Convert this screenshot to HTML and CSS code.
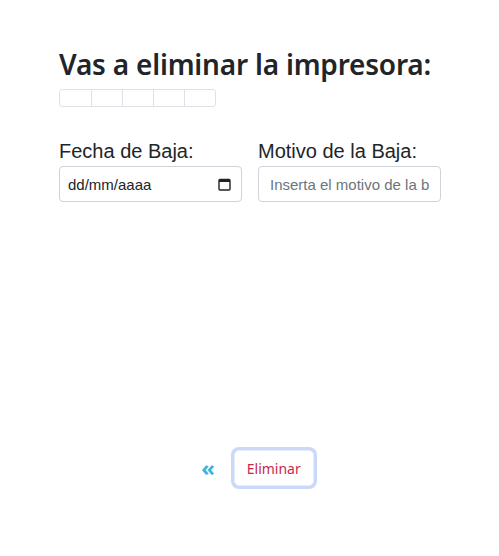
FILE: index.html
```html
<!DOCTYPE html>
<html lang="es">
<head>
<meta charset="utf-8">
<link rel="stylesheet" href="styles.css">
</head>
<body>
<main class="page">
  <h1 class="title">Vas a eliminar la impresora:</h1>
  <table class="info">
    <tr><td></td><td></td><td></td><td></td><td></td></tr>
  </table>
  <div class="fields">
    <div class="field">
      <label class="label">Fecha de Baja:</label>
      <div class="input date"><span>dd/mm/aaaa</span>
        <svg width="13" height="13" viewBox="0 0 13 13"><rect x="1" y="1.5" width="11" height="10.5" rx="1" fill="none" stroke="#222" stroke-width="1.4"/><rect x="1" y="1.5" width="11" height="2.5" fill="#222"/></svg>
      </div>
    </div>
    <div class="field">
      <label class="label">Motivo de la Baja:</label>
      <div class="input text"><span class="ph">Inserta el motivo de la b</span></div>
    </div>
  </div>
  <div class="actions">
    <span class="back">«</span>
    <button class="btn">Eliminar</button>
  </div>
</main>
</body>
</html>
```
FILE: styles.css
```css
* { box-sizing: border-box; }
body { margin: 0; background: #fff; font-family: "Noto Sans", sans-serif; color: #212529; }
.page { padding: 44px 0 8px 59px; width: 499px; }
.title { margin: 0; font-size: 28px; font-weight: 600; line-height: 40px; letter-spacing: -0.2px; }
.info { border-collapse: separate; border-spacing: 0; margin-top: 5px; border: 1px solid #dee2e6; border-radius: 3px; }
.info td { width: 31px; height: 16px; border-left: 1px solid #dee2e6; padding: 0; }
.info td:first-child { border-left: none; }
.fields { display: flex; gap: 16px; margin-top: 32px; }
.field { display: flex; flex-direction: column; width: 183px; }
.label { font-family: "Liberation Sans", Arial, sans-serif; font-size: 20px; line-height: 24px; color: #212529; margin-bottom: 3px; }
.input { height: 36px; border: 1px solid #ced4da; border-radius: 4px; display: flex; align-items: center; padding: 0 10px 0 11px; font-family: "Liberation Sans", Arial, sans-serif; font-size: 15px; color: #212529; overflow: hidden; white-space: nowrap; }
.date { justify-content: space-between; padding-left: 8px; }
.ph { color: #6c757d; }
.actions { display: flex; justify-content: center; align-items: center; gap: 19px; margin-top: 248px; padding: 0 59px 0 16px; }
.back { color: #3bb3e0; font-size: 22px; font-weight: 700; line-height: 1; margin-top: -3px; }
.btn { font-family: "Noto Sans", sans-serif; font-size: 14px; color: #c8294a; background: #fff; border: 1px solid #e9edf5; border-radius: 5px; padding: 0 12px; box-shadow: 0 0 0 3px #c9d8fb; height: 36px; }
```
